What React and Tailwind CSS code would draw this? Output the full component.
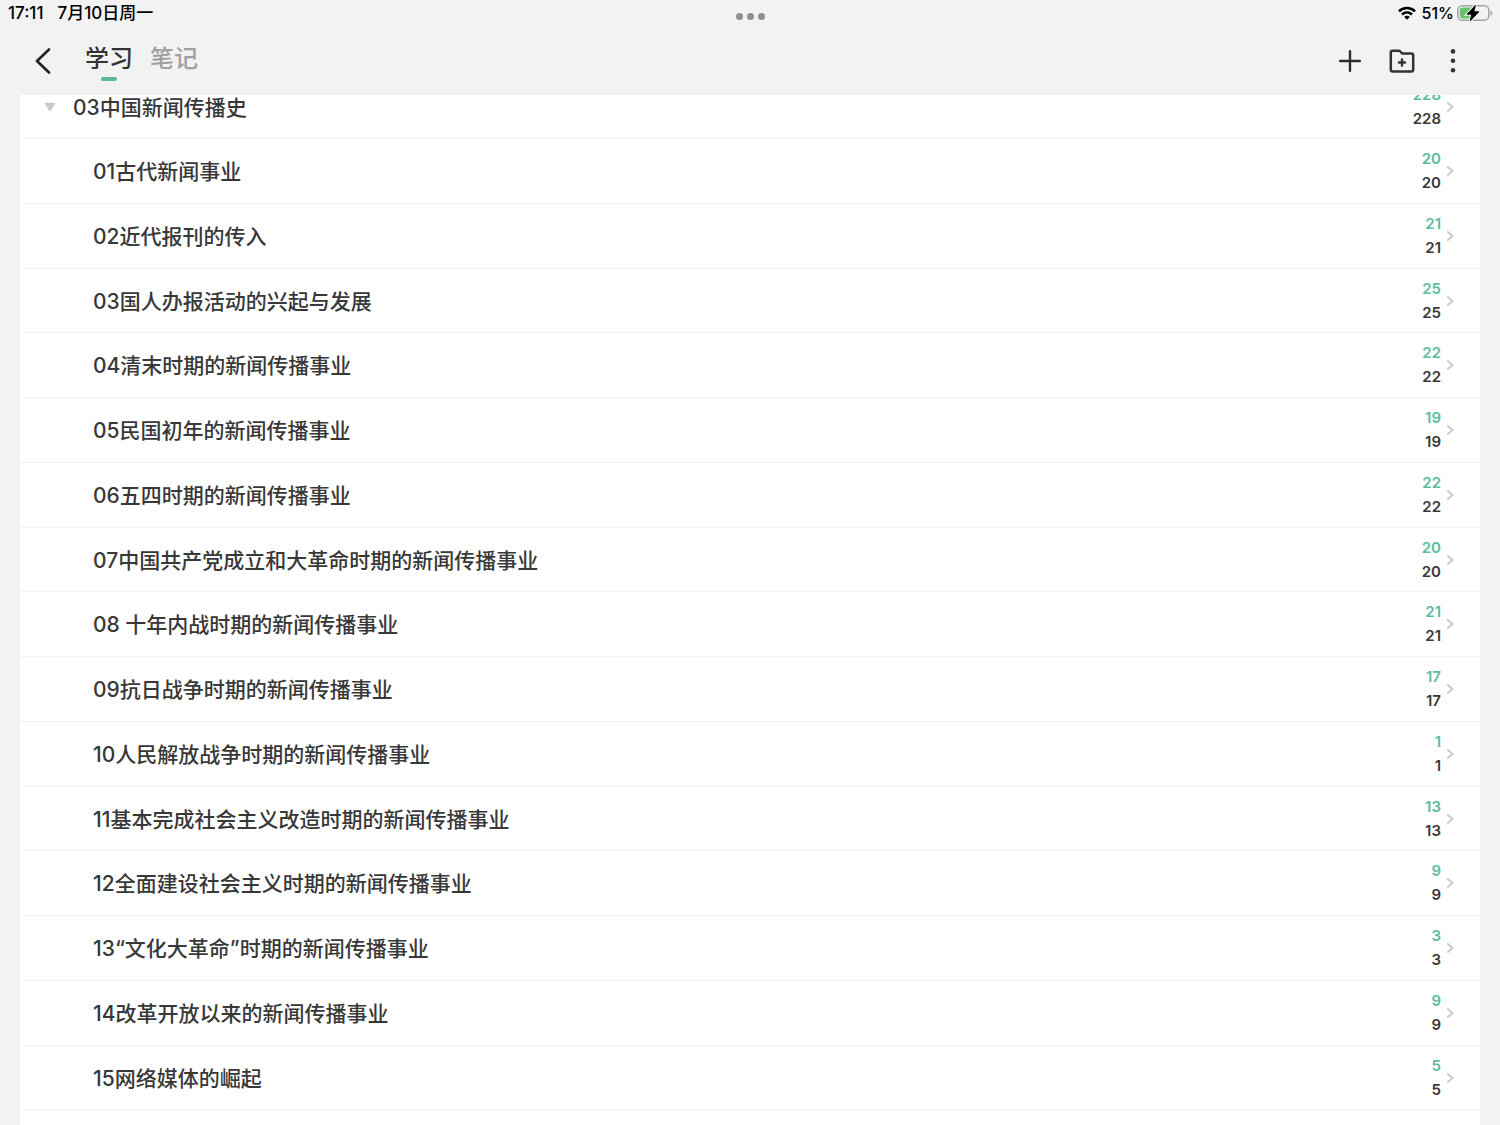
const chapter = { title: '03中国新闻传播史', learned: 228, total: 228 };

const sections = [
    { title: '01古代新闻事业', learned: 20, total: 20 },
    { title: '02近代报刊的传入', learned: 21, total: 21 },
    { title: '03国人办报活动的兴起与发展', learned: 25, total: 25 },
    { title: '04清末时期的新闻传播事业', learned: 22, total: 22 },
    { title: '05民国初年的新闻传播事业', learned: 19, total: 19 },
    { title: '06五四时期的新闻传播事业', learned: 22, total: 22 },
    { title: '07中国共产党成立和大革命时期的新闻传播事业', learned: 20, total: 20 },
    { title: '08 十年内战时期的新闻传播事业', learned: 21, total: 21 },
    { title: '09抗日战争时期的新闻传播事业', learned: 17, total: 17 },
    { title: '10人民解放战争时期的新闻传播事业', learned: 1, total: 1 },
    { title: '11基本完成社会主义改造时期的新闻传播事业', learned: 13, total: 13 },
    { title: '12全面建设社会主义时期的新闻传播事业', learned: 9, total: 9 },
    { title: '13“文化大革命”时期的新闻传播事业', learned: 3, total: 3 },
    { title: '14改革开放以来的新闻传播事业', learned: 9, total: 9 },
    { title: '15网络媒体的崛起', learned: 5, total: 5 },
];

function StatusBar() {
    return (
        <div className="grid h-[26px] shrink-0 grid-cols-3 items-center pl-2 pr-[7px] text-base font-medium text-black">
            <div className="flex gap-[14px] text-[17px] leading-6">
                <span>17:11</span>
                <span>7月10日周一</span>
            </div>
            <div className="flex gap-1 justify-self-center pt-[7px]">
                <span className="size-[7px] rounded-full bg-[#8e8e8e]" />
                <span className="size-[7px] rounded-full bg-[#8e8e8e]" />
                <span className="size-[7px] rounded-full bg-[#8e8e8e]" />
            </div>
            <div className="flex items-center justify-self-end">
                <svg className="mr-[6px]" width="18" height="14" viewBox="0 0 18 14" fill="none" stroke="currentColor">
                    <path d="M1 5.4 C5.4 0.9 12.6 0.9 17 5.4" strokeWidth="2.6" />
                    <path d="M4 8.5 C6.9 5.8 11.1 5.8 14 8.5" strokeWidth="2.4" />
                    <path d="M9 13.7 L6.2 10.9 C7.7 9.4 10.3 9.4 11.8 10.9 Z" fill="currentColor" stroke="none" />
                </svg>
                <span>51%</span>
                <svg className="ml-[3px]" width="36" height="18" viewBox="0 0 36 18">
                    <rect x="0.8" y="1.7" width="31" height="14.6" rx="4.6" fill="none" stroke="#a3a3a3" strokeWidth="1.5" />
                    <path d="M33.6 6.2 C36 7.2 36 10.8 33.6 11.8 Z" fill="#a3a3a3" />
                    <path d="M5.2 3.6 H16 V14.4 H5.2 A2.6 2.6 0 0 1 2.7 11.9 V6.1 A2.6 2.6 0 0 1 5.2 3.6 Z" fill="#65c466" />
                    <path d="M18.4 1.4 L10.2 10.2 H14.8 L13.2 16.8 L21.8 7.8 H16.9 Z" fill="#000" stroke="#f2f2f2" strokeWidth="3" paintOrder="stroke" />
                    <path d="M18.4 1.4 L10.2 10.2 H14.8 L13.2 16.8 L21.8 7.8 H16.9 Z" fill="#000" stroke="#000" strokeWidth="0.8" strokeLinejoin="round" />
                </svg>
            </div>
        </div>
    );
}

function NavBar() {
    return (
        <header className="flex h-[69px] shrink-0 items-center pl-[35px] pr-11 text-[#333]">
            <button aria-label="返回">
                <svg width="16" height="26" viewBox="0 0 16 26" fill="none" stroke="#222" strokeWidth="2.6" strokeLinecap="round" strokeLinejoin="round">
                    <path d="M14 1.5 L2 13 L14 24.5" />
                </svg>
            </button>
            <nav className="ml-[34px] flex gap-[17px] pt-[3px] text-2xl leading-8 font-medium">
                <button className="flex flex-col items-center">
                    学习
                    <span className="mt-[2px] h-1 w-4 rounded-full bg-[#56b99c]" />
                </button>
                <button className="flex flex-col items-center text-[#a0a0a0]">
                    笔记
                </button>
            </nav>
            <div className="ml-auto flex items-center">
                <button aria-label="添加">
                    <svg width="22" height="22" viewBox="0 0 22 22" stroke="#2c2c2c" strokeWidth="2.4" strokeLinecap="round">
                        <path d="M11 1.2 V20.8 M1.2 11 H20.8" />
                    </svg>
                </button>
                <button aria-label="新建文件夹" className="ml-7">
                    <svg width="26" height="24" viewBox="0 0 26 24" fill="none" stroke="#333" strokeWidth="2.5" strokeLinecap="round" strokeLinejoin="round">
                        <path d="M3.3 1.7 H9.6 Q10.6 1.7 11.3 2.5 L13.3 4.6 H22.2 Q24.2 4.6 24.2 6.6 V20.6 Q24.2 22.6 22.2 22.6 H3.8 Q1.8 22.6 1.8 20.6 V3.2 Q1.8 1.7 3.3 1.7 Z" />
                        <path d="M13 10.4 V16.4 M10 13.4 H16" />
                    </svg>
                </button>
                <button aria-label="更多" className="ml-[35px]">
                    <svg width="6" height="24" viewBox="0 0 6 24" fill="#333">
                        <circle cx="3" cy="2.4" r="2.3" />
                        <circle cx="3" cy="11.8" r="2.3" />
                        <circle cx="3" cy="21.2" r="2.3" />
                    </svg>
                </button>
            </div>
        </header>
    );
}

function Counts({ learned, total }) {
    return (
        <span className="ml-auto flex items-center gap-[5px] pr-[26px]">
            <span className="flex flex-col text-right text-[15px] leading-6 font-semibold">
                <span className="text-[#5abd9f]">{learned}</span>
                <span>{total}</span>
            </span>
            <svg width="8" height="12" viewBox="0 0 8 12" fill="none" stroke="#cacaca" strokeWidth="2">
                <path d="M1.3 1.4 L6.5 6 L1.3 10.6" />
            </svg>
        </span>
    );
}

export default function App() {
    return (
        <div className="flex h-screen flex-col overflow-hidden bg-[#f2f2f2] font-['Inter','Noto_Sans_CJK_SC',sans-serif]">
            <StatusBar />
            <NavBar />
            <main className="mx-5 min-h-0 flex-1 overflow-hidden bg-white text-[21px] font-medium text-[#383838]">
                {/* list is scrolled a little, so the chapter row sits partly under the nav bar */}
                <div className="-mt-5">
                    <button className="flex h-16 w-full items-center border-b border-[#f2f2f2] pl-6">
                        <svg width="12" height="10" viewBox="0 0 12 10" fill="#c9c9c9">
                            <path d="M1.2 0.8 H10.8 Q11.8 0.8 11.2 1.8 L6.9 8.6 Q6 9.8 5.1 8.6 L0.8 1.8 Q0.2 0.8 1.2 0.8 Z" />
                        </svg>
                        <span className="ml-[17px] pt-[2px]">{chapter.title}</span>
                        <Counts learned={chapter.learned} total={chapter.total} />
                    </button>
                    <ul>
                        {sections.map(section => (
                            <li key={section.title} className="h-[65px] border-b border-[#f2f2f2] nth-[4n+3]:h-16">
                                <button className="flex size-full items-center pl-[73px]">
                                    <span className="pt-[2px]">{section.title}</span>
                                    <Counts learned={section.learned} total={section.total} />
                                </button>
                            </li>
                        ))}
                    </ul>
                </div>
            </main>
        </div>
    );
}
